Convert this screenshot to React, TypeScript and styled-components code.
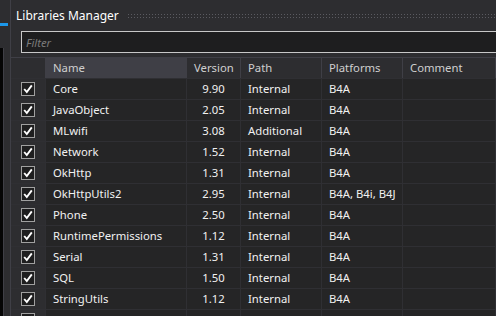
import React from 'react'
import styled, { createGlobalStyle } from 'styled-components'

const GlobalStyle = createGlobalStyle`
  html, body {
    margin: 0;
    padding: 0;
    background: #2d2d30;
    overflow: hidden;
  }
  body {
    font-family: 'Noto Sans', 'Open Sans', sans-serif;
    font-size: 11.3px;
    color: #f1f1f1;
  }
`

const COLS = '35px 141px 54px 81px 81px 1fr'

const Screen = styled.div`
  display: flex;
  width: 496px;
  height: 316px;
  overflow: hidden;
`

const SideStrip = styled.div`
  width: 10px;
  flex: none;
  display: flex;
  flex-direction: column;
  background: #2d2d30;
`

const SideAccent = styled.div`
  flex: none;
  margin-top: 23px;
  height: 3px;
  width: 8px;
  background: #1c97ea;
`

const SideWell = styled.div`
  margin-top: 22px;
  flex: 1;
  width: 3px;
  background: #050505;
  border-right: 1px solid #3f3f46;
`

const Panel = styled.div`
  flex: 1;
  display: flex;
  flex-direction: column;
  min-width: 0;
  border-left: 1px solid #3f3f46;
  & > * {
    flex-shrink: 0;
  }
`

const TitleBar = styled.div`
  height: 31px;
  display: flex;
  align-items: center;
  padding-left: 5px;
  gap: 8px;
`

const Title = styled.span`
  color: #ffffff;
  font-size: 12px;
  white-space: nowrap;
`

const Grip = styled.div`
  flex: 1;
  height: 6px;
  margin-top: 1px;
  background-image: radial-gradient(circle, #5a5a60 0.6px, transparent 0.8px);
  background-size: 3px 3px;
`

const FilterRow = styled.div`
  padding-left: 10px;
  height: 22px;
`

const FilterInput = styled.div`
  height: 20px;
  border: 1px solid #c8c8c8;
  border-right: none;
  background: #1e1e1f;
  display: flex;
  align-items: center;
  padding-left: 4px;
  color: #7a7a7a;
  font-style: italic;
`

const Grid = styled.div`
  margin-top: 4px;
  display: grid;
  grid-template-columns: ${COLS};
  grid-template-rows: 21px;
  grid-auto-rows: 21px;
`

const HeadCell = styled.div<{ $active?: boolean }>`
  background: ${p => (p.$active ? '#3f3f46' : '#2d2d30')};
  border-right: 1px solid #3f3f46;
  border-top: 1px solid #3f3f46;
  color: #cfcfcf;
  display: flex;
  align-items: center;
  padding-left: 7px;
  padding-bottom: 1px;
  white-space: nowrap;
`

const Cell = styled.div<{ $center?: boolean }>`
  background: #252526;
  border-right: 1px solid #2f2f33;
  border-top: 1px solid #2f2f33;
  display: flex;
  align-items: center;
  justify-content: ${p => (p.$center ? 'center' : 'flex-start')};
  padding-left: ${p => (p.$center ? 0 : 7)}px;
  padding-bottom: 2px;
  white-space: nowrap;
  overflow: hidden;
  color: #f1f1f1;
`

const CheckCell = styled(Cell)`
  justify-content: center;
  padding-left: 0;
  padding-bottom: 0;
  background: #2d2d30;
`

const Box = styled.div`
  width: 14px;
  height: 14px;
  box-sizing: border-box;
  border: 1px solid #a0a0a0;
  background: #1e1e1f;
  display: flex;
  align-items: center;
  justify-content: center;
`

const Check = () => (
  <Box>
    <svg width="12" height="12" viewBox="0 0 12 12">
      <path d="M2.2 6 L4.8 9 L9.8 2.4" fill="none" stroke="#ffffff" strokeWidth="1.9" />
    </svg>
  </Box>
)

type Lib = { name: string; version: string; path: string; platforms: string }

const libs: Lib[] = [
  { name: 'Core', version: '9.90', path: 'Internal', platforms: 'B4A' },
  { name: 'JavaObject', version: '2.05', path: 'Internal', platforms: 'B4A' },
  { name: 'MLwifi', version: '3.08', path: 'Additional', platforms: 'B4A' },
  { name: 'Network', version: '1.52', path: 'Internal', platforms: 'B4A' },
  { name: 'OkHttp', version: '1.31', path: 'Internal', platforms: 'B4A' },
  { name: 'OkHttpUtils2', version: '2.95', path: 'Internal', platforms: 'B4A, B4i, B4J' },
  { name: 'Phone', version: '2.50', path: 'Internal', platforms: 'B4A' },
  { name: 'RuntimePermissions', version: '1.12', path: 'Internal', platforms: 'B4A' },
  { name: 'Serial', version: '1.31', path: 'Internal', platforms: 'B4A' },
  { name: 'SQL', version: '1.50', path: 'Internal', platforms: 'B4A' },
  { name: 'StringUtils', version: '1.12', path: 'Internal', platforms: 'B4A' },
  { name: 'AccessibilityUtils', version: '1.00', path: 'Internal', platforms: 'B4A' },
]

export default function App() {
  return (
    <>
      <GlobalStyle />
      <Screen>
        <SideStrip>
          <SideAccent />
          <SideWell />
        </SideStrip>
        <Panel>
          <TitleBar>
            <Title>Libraries Manager</Title>
            <Grip />
          </TitleBar>
          <FilterRow>
            <FilterInput>Filter</FilterInput>
          </FilterRow>
          <Grid>
            <HeadCell />
            <HeadCell $active>Name</HeadCell>
            <HeadCell>Version</HeadCell>
            <HeadCell>Path</HeadCell>
            <HeadCell>Platforms</HeadCell>
            <HeadCell>Comment</HeadCell>
            {libs.map(l => (
              <React.Fragment key={l.name}>
                <CheckCell>
                  <Check />
                </CheckCell>
                <Cell>{l.name}</Cell>
                <Cell $center>{l.version}</Cell>
                <Cell>{l.path}</Cell>
                <Cell>{l.platforms}</Cell>
                <Cell />
              </React.Fragment>
            ))}
          </Grid>
        </Panel>
      </Screen>
    </>
  )
}
